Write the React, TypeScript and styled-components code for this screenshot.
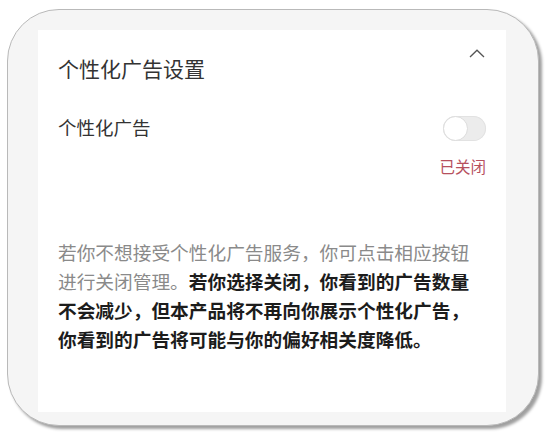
import styled, { createGlobalStyle } from "styled-components"

const GlobalStyle = createGlobalStyle`
  html, body {
    margin: 0;
    padding: 0;
    background: #ffffff;
  }
  body {
    font-family: "Noto Sans CJK SC", "Noto Sans", sans-serif;
  }
`

export default function App() {
  return (
    <>
      <GlobalStyle />
      <Page>
        <Frame>
          <Panel>
            <Header>
              <Title>个性化广告设置</Title>
              <Chevron width="16" height="9" viewBox="0 0 16 9">
                <path d="M1 8 L8 1.2 L15 8" fill="none" stroke="#555" strokeWidth="1.3" />
              </Chevron>
            </Header>

            <SettingRow>
              <Label>个性化广告</Label>
              <Toggle role="switch" aria-checked={false}>
                <Knob />
              </Toggle>
            </SettingRow>
            <Status>已关闭</Status>

            <Notice>
              若你不想接受个性化广告服务，你可点击相应按钮进行关闭管理。
              <Strong>
                若你选择关闭，你看到的广告数量不会减少，但本产品将不再向你展示个性化广告，你看到的广告将可能与你的偏好相关度降低。
              </Strong>
            </Notice>
          </Panel>
        </Frame>
      </Page>
    </>
  )
}

const Page = styled.div`
  width: 554px;
  height: 443px;
  padding: 9px 0 0 7px;
  box-sizing: border-box;
  overflow: hidden;
`

const Frame = styled.div`
  width: 532px;
  height: 417px;
  box-sizing: border-box;
  padding: 20px 32px 13px 30px;
  background: #f5f5f5;
  border: 1px solid #b9b9b9;
  border-radius: 52px;
  box-shadow: 3px 3px 3px rgba(0, 0, 0, 0.38);
  display: flex;
`

const Panel = styled.div`
  flex: 1;
  background: #ffffff;
  padding: 24px 20px 0 20px;
  display: flex;
  flex-direction: column;
`

const Header = styled.div`
  height: 28px;
  display: flex;
  align-items: center;
  justify-content: space-between;
`

const Title = styled.h1`
  margin: 0;
  font-size: 21px;
  line-height: 28px;
  font-weight: 400;
  color: #333333;
`

const Chevron = styled.svg`
  margin-top: -30px;
  margin-right: 1px;
`

const SettingRow = styled.div`
  margin-top: 34px;
  height: 25px;
  display: flex;
  align-items: center;
  justify-content: space-between;
`

const Label = styled.span`
  font-size: 18.5px;
  line-height: 25px;
  color: #333333;
  margin-top: -2px;
`

const Toggle = styled.div`
  width: 43px;
  height: 25px;
  border-radius: 13px;
  background: #ececec;
  box-shadow: inset 0 0 0 1px #e2e2e2;
  position: relative;
`

const Knob = styled.div`
  position: absolute;
  left: 0;
  top: 0;
  width: 25px;
  height: 25px;
  box-sizing: border-box;
  border-radius: 50%;
  background: #ffffff;
  border: 1px solid #dcdcdc;
`

const Status = styled.div`
  margin-top: 15px;
  align-self: flex-end;
  font-size: 15.5px;
  line-height: 20px;
  color: #b6505e;
`

const Notice = styled.p`
  margin: 61px 0 0 0;
  font-size: 18.7px;
  line-height: 29px;
  color: #8a8a8a;
  width: 420px;
`

const Strong = styled.strong`
  font-weight: 700;
  color: #1c1c1c;
`
